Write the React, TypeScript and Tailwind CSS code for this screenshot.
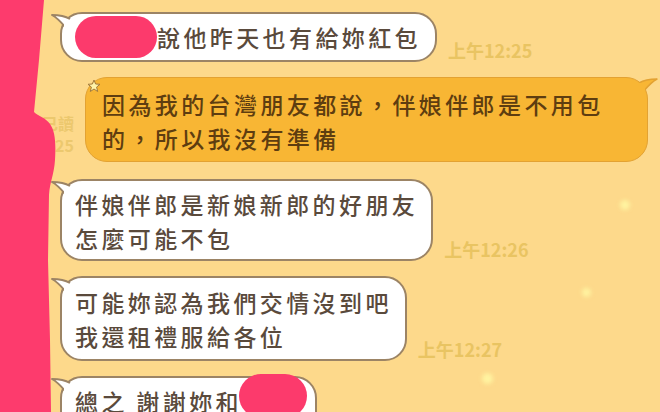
import React from 'react'

const font = { fontFamily: '"Noto Sans CJK TC", "Noto Sans CJK SC", "Noto Sans", sans-serif' }

function LeftTail() {
  return (
    <svg className="absolute -left-[11px] -top-[2px]" width="20" height="22" viewBox="0 0 20 22">
      <path d="M19 20 C14 16 10 8 1 3 C8 3 14 4 19 7" fill="#ffffff" stroke="#9c8465" strokeWidth="2" strokeLinejoin="round" />
      <rect x="13" y="8" width="8" height="14" fill="#ffffff" />
    </svg>
  )
}

function RightTail() {
  return (
    <svg className="absolute -right-[11px] -top-[2px]" width="20" height="22" viewBox="0 0 20 22">
      <path d="M1 20 C6 16 10 8 19 3 C12 3 6 4 1 7" fill="#f8b634" stroke="#e3a232" strokeWidth="1.5" strokeLinejoin="round" />
      <rect x="-1" y="7" width="8" height="15" fill="#f8b634" />
    </svg>
  )
}

function Time({ text }: { text: string }) {
  return (
    <span className="mb-[3px] shrink-0 whitespace-nowrap text-[18px] leading-none font-semibold text-[#e9c462]">{text}</span>
  )
}

function WhiteBubble({ children, extra }: { children: React.ReactNode; extra?: React.ReactNode }) {
  return (
    <div className="relative rounded-[22px] border-2 border-[#9c8465] bg-white px-[13px] pb-[4px] pt-[6px] text-[23px] leading-[34px] font-medium tracking-[3.4px] text-[#5a4a3c]">
      <LeftTail />
      {children}
      {extra}
    </div>
  )
}

export default function App() {
  return (
    <div className="relative h-[412px] w-[660px] overflow-hidden bg-[#fdd98b]" style={font}>
      {/* faint stars on the wallpaper */}
      <div className="absolute left-[620px] top-[200px] h-[10px] w-[10px] rounded-full bg-[#fff3a0] blur-[2px]" />
      <div className="absolute left-[582px] top-[288px] h-[9px] w-[9px] rounded-full bg-[#fff3a0] blur-[2px]" />
      <div className="absolute left-[482px] top-[373px] h-[11px] w-[11px] rounded-full bg-[#fff3a0] blur-[2px]" />

      <div className="flex flex-col gap-[15px] pl-[60px] pt-[12px]">
        {/* row 1 */}
        <div className="flex items-end gap-[11px]">
          <div className="relative flex items-center rounded-[22px] border-2 border-[#9c8465] bg-white py-[2px] pl-[13px] pr-[14px] text-[23px] leading-[34px] font-medium tracking-[3.4px] text-[#5a4a3c]">
            <LeftTail />
            <span className="h-[42px] w-[82px] rounded-full bg-[#fc3a6c]" />
            <span>說他昨天也有給妳紅包</span>
          </div>
          <Time text="上午12:25" />
        </div>

        {/* row 2: my message */}
        <div className="-ml-[60px] flex items-end justify-end gap-[11px] pr-[12px]">
          <div className="mb-[6px] flex shrink-0 flex-col items-end whitespace-nowrap text-[16px] leading-[22px] font-semibold text-[#ecc86e]">
            <span>已讀</span>
            <span>上午12:25</span>
          </div>
          <div className="relative w-[563px] shrink-0 rounded-[22px] border-[1.5px] border-[#e3a232] bg-[#f8b634] px-[16px] pb-[6px] pt-[9px] text-[23px] leading-[34px] font-medium tracking-[3.4px] text-[#5e3d10]">
            <RightTail />
            <svg className="absolute left-[1px] top-[1px]" width="14" height="14" viewBox="0 0 14 14">
              <path d="M7 1 L8.6 5 L13 5.3 L9.6 8.1 L10.7 12.5 L7 10 L3.3 12.5 L4.4 8.1 L1 5.3 L5.4 5 Z" fill="#fff3a8" stroke="#a27a3c" strokeWidth="1" strokeLinejoin="round" />
            </svg>
            <p>因為我的台灣朋友都說，伴娘伴郎是不用包</p>
            <p>的，所以我沒有準備</p>
          </div>
        </div>

        {/* row 3 */}
        <div className="mt-[2px] flex items-end gap-[11px]">
          <WhiteBubble>
            <p>伴娘伴郎是新娘新郎的好朋友</p>
            <p>怎麼可能不包</p>
          </WhiteBubble>
          <Time text="上午12:26" />
        </div>

        {/* row 4 */}
        <div className="flex items-end gap-[11px]">
          <WhiteBubble>
            <p className="pt-[1px]">可能妳認為我們交情沒到吧</p>
            <p className="pb-[2px]">我還租禮服給各位</p>
          </WhiteBubble>
          <Time text="上午12:27" />
        </div>

        {/* row 5 */}
        <div className="flex items-end gap-[11px]">
          <WhiteBubble
            extra={<span className="absolute left-[177px] -top-[4px] h-[44px] w-[68px] rounded-full bg-[#fc3a6c]" />}
          >
            <p className="pr-[60px]">總之 謝謝妳和</p>
            <p>&nbsp;</p>
          </WhiteBubble>
        </div>
      </div>

      {/* redaction strip on the left edge */}
      <svg className="absolute left-0 top-0" width="60" height="412" viewBox="0 0 60 412">
        <path
          d="M0 0 L44 0 L39 60 L34 112 C38 116 46 118 50 124 C55 131 56 142 55 160 C54 175 50 181 49 195 L48 260 L50 340 L51 412 L0 412 Z"
          fill="#fd3b6d"
        />
      </svg>
    </div>
  )
}
